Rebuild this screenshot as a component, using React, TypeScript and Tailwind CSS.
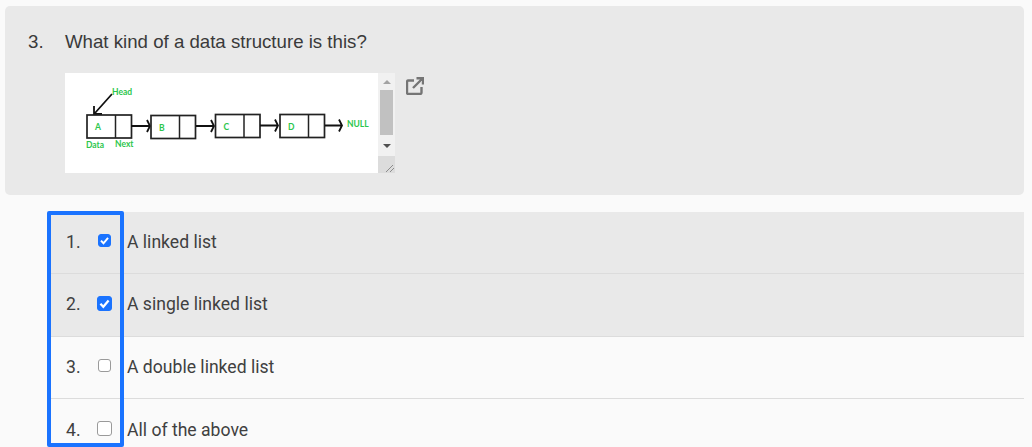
const options = [
  { n: '1.', label: 'A linked list', checked: true, size: 'w-[13px] h-[13px]', bg: 'bg-[#e9e9e9]', h: 'h-[62px]' },
  { n: '2.', label: 'A single linked list', checked: true, size: 'w-[15px] h-[15px]', bg: 'bg-[#e9e9e9]', h: 'h-[63px]' },
  { n: '3.', label: 'A double linked list', checked: false, size: 'w-[13px] h-[13px]', bg: 'bg-[#fafafa]', h: 'h-[62px]' },
  { n: '4.', label: 'All of the above', checked: false, size: 'w-[15px] h-[15px]', bg: 'bg-[#fafafa]', h: 'h-[63px]' },
]

const green = '#2cc64c'

function Label({ x, y, children }: { x: number; y: number; children: string }) {
  return (
    <text x={x} y={y} fontSize="8.5" fontWeight="700" fill={green} fontFamily="Lato, sans-serif">
      {children}
    </text>
  )
}

function Node({ x, y, label }: { x: number; y: number; label: string }) {
  return (
    <g>
      <rect x={x} y={y} width="44.5" height="23" fill="white" stroke="#222" strokeWidth="1.7" />
      <line x1={x + 28.5} y1={y} x2={x + 28.5} y2={y + 23} stroke="#222" strokeWidth="1.5" />
      <Label x={x + 8} y={y + 15}>{label}</Label>
    </g>
  )
}

function Arrow({ x1, x2, y }: { x1: number; x2: number; y: number }) {
  return (
    <path d={`M${x1} ${y}H${x2}M${x2 - 3} ${y - 6}L${x2} ${y}L${x2 - 3} ${y + 6}`} fill="none" stroke="#111" strokeWidth="1.8" />
  )
}

function LinkedListDiagram() {
  return (
    <svg width="313" height="100" viewBox="0 0 313 100" className="block">
      <path d="M47 21L30 40M29 33V41H37" fill="none" stroke="#111" strokeWidth="1.8" />
      <Label x={47} y={22}>Head</Label>
      <Node x={22} y={42} label="A" />
      <Arrow x1={66} x2={85} y={53} />
      <Node x={86} y={42.5} label="B" />
      <Arrow x1={131} x2={149} y={53} />
      <Node x={150.5} y={41.5} label="C" />
      <Arrow x1={195} x2={213} y={52.5} />
      <Node x={215} y={41.5} label="D" />
      <Arrow x1={260} x2={277} y={52.5} />
      <Label x={282} y={54}>NULL</Label>
      <Label x={21} y={75}>Data</Label>
      <Label x={50} y={74}>Next</Label>
    </svg>
  )
}

function FakeScrollbar() {
  return (
    <div className="w-[17px] h-[100px] bg-[#f1f1f1] flex flex-col">
      <div className="h-[17px] flex items-center justify-center">
        <div className="w-0 h-0 border-x-[4px] border-x-transparent border-b-[4px] border-b-[#a3a3a3]" />
      </div>
      <div className="mx-[2px] h-[45px] bg-[#c1c1c1]" />
      <div className="h-[21px] flex items-center justify-center">
        <div className="w-0 h-0 border-x-[4px] border-x-transparent border-t-[4px] border-t-[#505050]" />
      </div>
      <div className="flex-1 bg-[#dcdcdc] flex items-end justify-end overflow-hidden">
        <svg width="10" height="10" viewBox="0 0 10 10">
          <path d="M1 9L8 2M5 9L9 5" stroke="#777" strokeWidth="0.8" fill="none" />
        </svg>
      </div>
    </div>
  )
}

export default function App() {
  return (
    <div className="h-[447px] overflow-hidden bg-[#fafafa] pt-[6px] relative">
      {/* Question */}
      <div className="ml-[5px] mr-[8px] h-[189px] bg-[#e9e9e9] rounded-[5px] pl-[23px] pt-[25px]">
        <div className="flex text-[18.66px] leading-[22px] text-[#3a3a3a] font-['Liberation_Sans',sans-serif]">
          <span className="w-[37px]">3.</span>
          <span>What kind of a data structure is this?</span>
        </div>
        <div className="flex ml-[37px] mt-[20px] items-start">
          <div className="flex">
            <div className="w-[313px] h-[100px] bg-white">
              <LinkedListDiagram />
            </div>
            <FakeScrollbar />
          </div>
          <svg width="18" height="18" viewBox="0 0 18 18" className="ml-[11px] mt-[4px]" fill="none" stroke="#757575" strokeWidth="2.4">
            <path d="M8 3.5H2.5Q1 3.5 1 5V15.5Q1 17 2.5 17H14Q15.5 17 15.5 15.5V10" />
            <path d="M7 11L16 2M10.5 1.2H17V7.5" />
          </svg>
        </div>
      </div>

      {/* Answers */}
      <div className="ml-[51px] mr-[8px] mt-[17px] font-['Roboto',sans-serif] text-[17.6px] text-[#404040]">
        {options.map((o, i) => (
          <div key={o.n} className={`flex items-center pb-[1px] ${o.h} ${o.bg} ${i < 3 ? 'border-b border-[#dcdcdc]' : ''}`}>
            <span className="w-[38px] pl-[15px] shrink-0">{o.n}</span>
            <span className="w-[30px] mb-[3px] shrink-0 flex justify-center">
              <span className={`relative flex ${o.size}`}>
                <input
                  type="checkbox"
                  checked={o.checked}
                  readOnly
                  className="appearance-none w-full h-full m-0 rounded-[3px] border border-[#9a9a9a] bg-white checked:bg-[#1a73ff] checked:border-[#1a73ff]"
                />
                {o.checked && (
                  <svg viewBox="0 0 14 14" className="absolute inset-0 w-full h-full">
                    <path d="M3.2 7.2L5.9 10L10.8 4.2" fill="none" stroke="white" strokeWidth="2.1" />
                  </svg>
                )}
              </span>
            </span>
            <span className="ml-[8px]">{o.label}</span>
          </div>
        ))}
      </div>

      {/* Highlight around numbers and checkboxes */}
      <div className="absolute left-[47px] top-[211px] w-[77px] h-[236px] border-[4px] border-[#1a73ff] rounded-[2px]" />
    </div>
  )
}
